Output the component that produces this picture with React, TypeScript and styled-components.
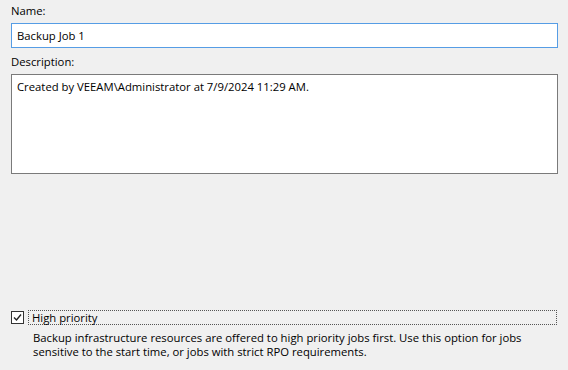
import React from "react";
import styled, { createGlobalStyle } from "styled-components";

const GlobalStyle = createGlobalStyle`
  html, body {
    margin: 0;
    padding: 0;
    background: #f0f0f0;
  }
`;

const Page = styled.div`
  box-sizing: border-box;
  width: 568px;
  height: 370px;
  padding: 4px 11px 11px 11px;
  display: flex;
  flex-direction: column;
  font-family: "Open Sans", "Noto Sans", sans-serif;
  font-size: 11.3px;
  color: #000;
  background: #f0f0f0;
`;

const Label = styled.div`
  height: 14px;
  line-height: 14px;
  margin-bottom: 5px;
`;

const TextBox = styled.div<{ $focused?: boolean; $tall?: boolean }>`
  box-sizing: border-box;
  width: 547px;
  height: ${(p) => (p.$tall ? "100px" : "25px")};
  border: 1px solid ${(p) => (p.$focused ? "#569de5" : "#7a7a7a")};
  background: #fff;
  padding: ${(p) => (p.$tall ? "4px 5px" : "0 5px")};
  display: flex;
  align-items: ${(p) => (p.$tall ? "flex-start" : "center")};
  line-height: 15px;
`;

const Section = styled.div`
  margin-bottom: 7px;
`;

const Spacer = styled.div`
  flex: 1;
`;

const CheckRow = styled.div`
  display: flex;
  align-items: center;
  gap: 4px;
  height: 15px;
`;

const Box = styled.div`
  box-sizing: border-box;
  width: 13px;
  height: 13px;
  border: 1px solid #333;
  background: #fff;
  display: flex;
  align-items: center;
  justify-content: center;
`;

const FocusLabel = styled.div`
  flex: 1;
  height: 15px;
  box-sizing: border-box;
  border: 1px dotted #555;
  padding-left: 3px;
  line-height: 13px;
`;

const Hint = styled.div`
  margin: 6px 0 0 22px;
  line-height: 14px;
  width: 525px;
`;

export default function App() {
  return (
    <>
      <GlobalStyle />
      <Page>
        <Section>
          <Label>Name:</Label>
          <TextBox $focused>Backup Job 1</TextBox>
        </Section>
        <Section>
          <Label>Description:</Label>
          <TextBox $tall>Created by VEEAM\Administrator at 7/9/2024 11:29 AM.</TextBox>
        </Section>
        <Spacer />
        <CheckRow>
          <Box>
            <svg width="9" height="9" viewBox="0 0 9 9">
              <path d="M1 4.5 L3.5 7 L8 1.5" fill="none" stroke="#222" strokeWidth="1.4" />
            </svg>
          </Box>
          <FocusLabel>High priority</FocusLabel>
        </CheckRow>
        <Hint>
          Backup infrastructure resources are offered to high priority jobs first. Use this option for jobs
          sensitive to the start time, or jobs with strict RPO requirements.
        </Hint>
      </Page>
    </>
  );
}
